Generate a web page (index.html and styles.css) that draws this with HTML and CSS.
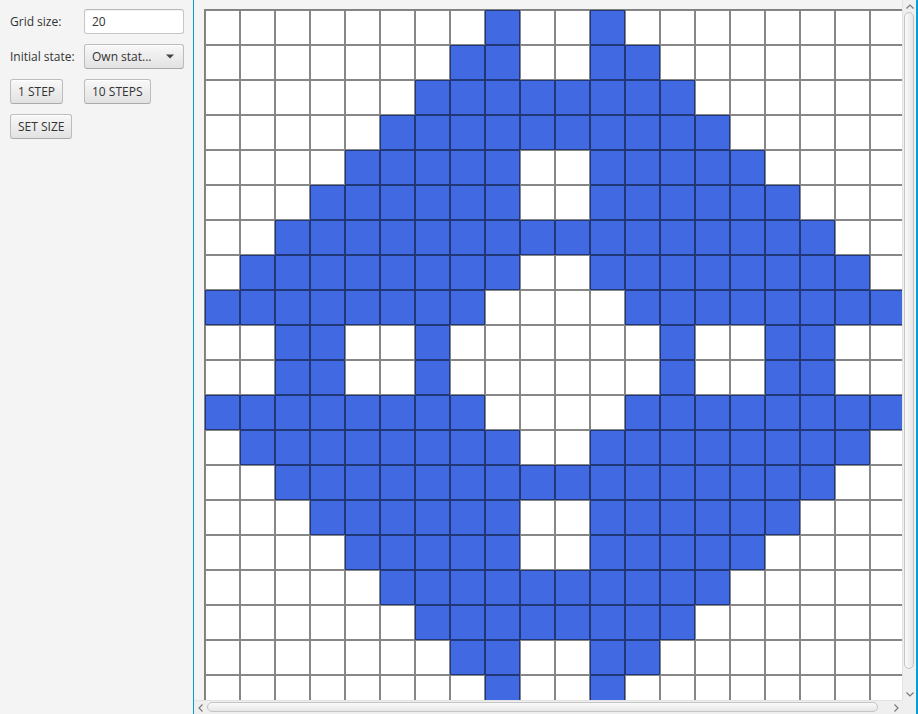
FILE: index.html
```html
<!DOCTYPE html>
<html>
<head>
<meta charset="utf-8">
<title>Game of Life</title>
<link rel="stylesheet" href="styles.css">
</head>
<body>
<div class="app">
  <aside class="controls">
    <label class="lbl">Grid size:</label>
    <div class="field">20</div>
    <label class="lbl">Initial state:</label>
    <div class="combo"><span>Own stat...</span><svg class="caret" width="8" height="5" viewBox="0 0 8 5"><path d="M0 0.5 H8 L4 4.5 Z" fill="#444"/></svg></div>
    <button class="btn">1 STEP</button>
    <button class="btn">10 STEPS</button>
    <button class="btn">SET SIZE</button>
  </aside>
  <section class="scrollpane">
    <div class="pane-top">
      <div class="viewport">
        <div class="board">
          <i></i><i></i><i></i><i></i><i></i><i></i><i></i><i></i><i class="b"></i><i></i><i></i><i class="b"></i><i></i><i></i><i></i><i></i><i></i><i></i><i></i><i></i>
          <i></i><i></i><i></i><i></i><i></i><i></i><i></i><i class="b"></i><i class="b"></i><i></i><i></i><i class="b"></i><i class="b"></i><i></i><i></i><i></i><i></i><i></i><i></i><i></i>
          <i></i><i></i><i></i><i></i><i></i><i></i><i class="b"></i><i class="b"></i><i class="b"></i><i class="b"></i><i class="b"></i><i class="b"></i><i class="b"></i><i class="b"></i><i></i><i></i><i></i><i></i><i></i><i></i>
          <i></i><i></i><i></i><i></i><i></i><i class="b"></i><i class="b"></i><i class="b"></i><i class="b"></i><i class="b"></i><i class="b"></i><i class="b"></i><i class="b"></i><i class="b"></i><i class="b"></i><i></i><i></i><i></i><i></i><i></i>
          <i></i><i></i><i></i><i></i><i class="b"></i><i class="b"></i><i class="b"></i><i class="b"></i><i class="b"></i><i></i><i></i><i class="b"></i><i class="b"></i><i class="b"></i><i class="b"></i><i class="b"></i><i></i><i></i><i></i><i></i>
          <i></i><i></i><i></i><i class="b"></i><i class="b"></i><i class="b"></i><i class="b"></i><i class="b"></i><i class="b"></i><i></i><i></i><i class="b"></i><i class="b"></i><i class="b"></i><i class="b"></i><i class="b"></i><i class="b"></i><i></i><i></i><i></i>
          <i></i><i></i><i class="b"></i><i class="b"></i><i class="b"></i><i class="b"></i><i class="b"></i><i class="b"></i><i class="b"></i><i class="b"></i><i class="b"></i><i class="b"></i><i class="b"></i><i class="b"></i><i class="b"></i><i class="b"></i><i class="b"></i><i class="b"></i><i></i><i></i>
          <i></i><i class="b"></i><i class="b"></i><i class="b"></i><i class="b"></i><i class="b"></i><i class="b"></i><i class="b"></i><i class="b"></i><i></i><i></i><i class="b"></i><i class="b"></i><i class="b"></i><i class="b"></i><i class="b"></i><i class="b"></i><i class="b"></i><i class="b"></i><i></i>
          <i class="b"></i><i class="b"></i><i class="b"></i><i class="b"></i><i class="b"></i><i class="b"></i><i class="b"></i><i class="b"></i><i></i><i></i><i></i><i></i><i class="b"></i><i class="b"></i><i class="b"></i><i class="b"></i><i class="b"></i><i class="b"></i><i class="b"></i><i class="b"></i>
          <i></i><i></i><i class="b"></i><i class="b"></i><i></i><i></i><i class="b"></i><i></i><i></i><i></i><i></i><i></i><i></i><i class="b"></i><i></i><i></i><i class="b"></i><i class="b"></i><i></i><i></i>
          <i></i><i></i><i class="b"></i><i class="b"></i><i></i><i></i><i class="b"></i><i></i><i></i><i></i><i></i><i></i><i></i><i class="b"></i><i></i><i></i><i class="b"></i><i class="b"></i><i></i><i></i>
          <i class="b"></i><i class="b"></i><i class="b"></i><i class="b"></i><i class="b"></i><i class="b"></i><i class="b"></i><i class="b"></i><i></i><i></i><i></i><i></i><i class="b"></i><i class="b"></i><i class="b"></i><i class="b"></i><i class="b"></i><i class="b"></i><i class="b"></i><i class="b"></i>
          <i></i><i class="b"></i><i class="b"></i><i class="b"></i><i class="b"></i><i class="b"></i><i class="b"></i><i class="b"></i><i class="b"></i><i></i><i></i><i class="b"></i><i class="b"></i><i class="b"></i><i class="b"></i><i class="b"></i><i class="b"></i><i class="b"></i><i class="b"></i><i></i>
          <i></i><i></i><i class="b"></i><i class="b"></i><i class="b"></i><i class="b"></i><i class="b"></i><i class="b"></i><i class="b"></i><i class="b"></i><i class="b"></i><i class="b"></i><i class="b"></i><i class="b"></i><i class="b"></i><i class="b"></i><i class="b"></i><i class="b"></i><i></i><i></i>
          <i></i><i></i><i></i><i class="b"></i><i class="b"></i><i class="b"></i><i class="b"></i><i class="b"></i><i class="b"></i><i></i><i></i><i class="b"></i><i class="b"></i><i class="b"></i><i class="b"></i><i class="b"></i><i class="b"></i><i></i><i></i><i></i>
          <i></i><i></i><i></i><i></i><i class="b"></i><i class="b"></i><i class="b"></i><i class="b"></i><i class="b"></i><i></i><i></i><i class="b"></i><i class="b"></i><i class="b"></i><i class="b"></i><i class="b"></i><i></i><i></i><i></i><i></i>
          <i></i><i></i><i></i><i></i><i></i><i class="b"></i><i class="b"></i><i class="b"></i><i class="b"></i><i class="b"></i><i class="b"></i><i class="b"></i><i class="b"></i><i class="b"></i><i class="b"></i><i></i><i></i><i></i><i></i><i></i>
          <i></i><i></i><i></i><i></i><i></i><i></i><i class="b"></i><i class="b"></i><i class="b"></i><i class="b"></i><i class="b"></i><i class="b"></i><i class="b"></i><i class="b"></i><i></i><i></i><i></i><i></i><i></i><i></i>
          <i></i><i></i><i></i><i></i><i></i><i></i><i></i><i class="b"></i><i class="b"></i><i></i><i></i><i class="b"></i><i class="b"></i><i></i><i></i><i></i><i></i><i></i><i></i><i></i>
          <i></i><i></i><i></i><i></i><i></i><i></i><i></i><i></i><i class="b"></i><i></i><i></i><i class="b"></i><i></i><i></i><i></i><i></i><i></i><i></i><i></i><i></i>
        </div>
      </div>
      <div class="vbar">
        <span class="arrow"><svg width="8" height="5" viewBox="0 0 8 5"><path d="M0.5 4.5 L4 1 L7.5 4.5" fill="none" stroke="#7a7a7a" stroke-width="1.2"/></svg></span>
        <div class="track"><div class="thumb vthumb"></div></div>
        <span class="arrow"><svg width="8" height="5" viewBox="0 0 8 5"><path d="M0.5 0.5 L4 4 L7.5 0.5" fill="none" stroke="#7a7a7a" stroke-width="1.2"/></svg></span>
      </div>
    </div>
    <div class="pane-bottom">
      <div class="hbar">
        <span class="arrow"><svg width="5" height="8" viewBox="0 0 5 8"><path d="M4.5 0.5 L1 4 L4.5 7.5" fill="none" stroke="#7a7a7a" stroke-width="1.2"/></svg></span>
        <div class="track"><div class="thumb hthumb"></div></div>
        <span class="arrow"><svg width="5" height="8" viewBox="0 0 5 8"><path d="M0.5 0.5 L4 4 L0.5 7.5" fill="none" stroke="#7a7a7a" stroke-width="1.2"/></svg></span>
      </div>
      <div class="corner"></div>
    </div>
  </section>
</div>
</body>
</html>
```

FILE: styles.css
```css
* { box-sizing: border-box; }
html, body { margin: 0; padding: 0; }
body {
  width: 918px;
  height: 714px;
  overflow: hidden;
  background: #f4f4f4;
  font-family: "Open Sans", "Noto Sans", sans-serif;
  font-size: 12px;
  color: #333;
}
.app {
  display: flex;
  height: 714px;
}
.controls {
  width: 193px;
  flex: none;
  display: grid;
  grid-template-columns: 74px 100px;
  grid-auto-rows: 25px;
  row-gap: 10px;
  align-content: start;
  padding: 9px 10px;
}
.lbl {
  display: flex;
  align-items: center;
  white-space: nowrap;
}
.field {
  background: #fff;
  border: 1px solid #c6c6c6;
  border-top-color: #b8b8b8;
  border-radius: 3px;
  padding: 0 7px;
  display: flex;
  align-items: center;
  box-shadow: inset 0 1px 1px rgba(0,0,0,0.05);
}
.combo, .btn {
  border: 1px solid #bcbcbc;
  border-bottom-color: #aaaaaa;
  border-radius: 3px;
  background: linear-gradient(#f8f8f8, #e2e2e2);
  box-shadow: inset 0 1px 0 #fff;
  color: #333;
  font: inherit;
}
.combo {
  display: flex;
  align-items: center;
  justify-content: space-between;
  padding: 0 9px 0 7px;
}
.caret { display: block; }
.btn {
  justify-self: start;
  padding: 0 7px;
  height: 25px;
  margin: 0;
}
.scrollpane {
  flex: 1;
  display: flex;
  flex-direction: column;
  border-left: 1px solid #039ed3;
  border-right: 2px solid #039ed3;
  min-width: 0;
}
.pane-top {
  display: flex;
  height: 700px;
}
.viewport {
  flex: 1;
  overflow: hidden;
  padding: 9px 0 0 10px;
  min-width: 0;
}
.board {
  display: grid;
  grid-template-columns: repeat(20, 35px);
  grid-auto-rows: 35px;
  width: 702px;
  border: 1px solid rgba(0,0,0,0.47);
}
.board i {
  display: block;
  background: #fff;
  border: 1px solid rgba(0,0,0,0.47);
}
.board i.b { background-color: #4169e1; }
.vbar {
  width: 14px;
  flex: none;
  display: flex;
  flex-direction: column;
  background: #efefef;
  border-left: 1px solid #e2e2e2;
}
.arrow {
  flex: none;
  display: flex;
  align-items: center;
  justify-content: center;
}
.vbar .arrow { height: 12px; }
.vbar .track { flex: 1; padding: 0 2px 0 1px; }
.thumb {
  background: linear-gradient(90deg, #fafafa, #e6e6e6);
  border: 1px solid #c4c4c4;
  border-radius: 5px;
}
.vthumb { height: 657px; }
.pane-bottom {
  display: flex;
  height: 14px;
}
.hbar {
  flex: 1;
  display: flex;
  background: #efefef;
  border-top: 1px solid #e2e2e2;
}
.hbar .arrow { width: 12px; }
.hbar .track { flex: 1; padding: 1px 0 2px 1px; }
.hbar .thumb {
  background: linear-gradient(#fafafa, #e6e6e6);
  height: 100%;
}
.hthumb { width: 671px; }
.corner {
  width: 14px;
  flex: none;
  background: #efefef;
}
```
